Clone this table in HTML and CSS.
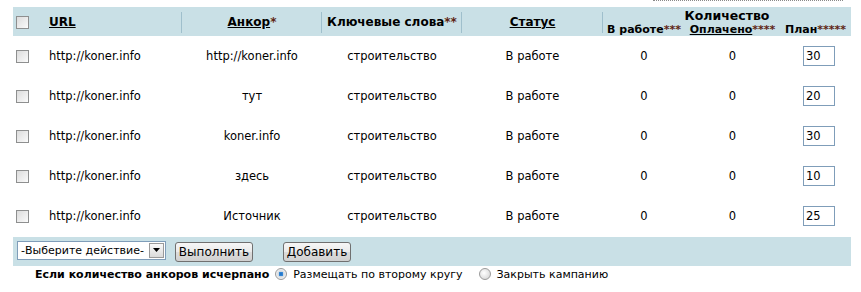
FILE: index.html
```html
<!DOCTYPE html>
<html lang="ru">
<head>
<meta charset="utf-8">
<link rel="stylesheet" href="styles.css">
</head>
<body>
<div class="topline"></div>
<table class="grid">
  <colgroup>
    <col class="w-chk"><col class="w-url"><col class="w-anc"><col class="w-kw"><col class="w-st"><col class="w-q1"><col class="w-q2"><col class="w-q3">
  </colgroup>
  <thead>
    <tr class="hr1">
      <th rowspan="2" class="hc-chk"><input type="checkbox" class="chk"></th>
      <th rowspan="2" class="hc-url sep"><a href="#">URL</a></th>
      <th rowspan="2" class="sep"><a href="#">Анкор</a><span class="ast">*</span></th>
      <th rowspan="2" class="sep">Ключевые слова<span class="ast">**</span></th>
      <th rowspan="2" class="sep"><a href="#">Статус</a></th>
      <th colspan="3" class="hc-qty">Количество</th>
    </tr>
    <tr class="hr2">
      <th class="hc-sub">В работе<span class="ast">***</span></th>
      <th class="hc-sub"><a href="#">Оплачено</a><span class="ast">****</span></th>
      <th class="hc-sub">План<span class="ast">*****</span></th>
    </tr>
  </thead>
  <tbody>
    <tr>
      <td class="c-chk"><input type="checkbox" class="chk"></td>
      <td class="c-url">http://koner.info</td>
      <td>http://koner.info</td>
      <td>строительство</td>
      <td>В работе</td>
      <td>0</td>
      <td>0</td>
      <td><input type="text" class="plan" value="30"></td>
    </tr>
    <tr>
      <td class="c-chk"><input type="checkbox" class="chk"></td>
      <td class="c-url">http://koner.info</td>
      <td>тут</td>
      <td>строительство</td>
      <td>В работе</td>
      <td>0</td>
      <td>0</td>
      <td><input type="text" class="plan" value="20"></td>
    </tr>
    <tr>
      <td class="c-chk"><input type="checkbox" class="chk"></td>
      <td class="c-url">http://koner.info</td>
      <td>koner.info</td>
      <td>строительство</td>
      <td>В работе</td>
      <td>0</td>
      <td>0</td>
      <td><input type="text" class="plan" value="30"></td>
    </tr>
    <tr>
      <td class="c-chk"><input type="checkbox" class="chk"></td>
      <td class="c-url">http://koner.info</td>
      <td>здесь</td>
      <td>строительство</td>
      <td>В работе</td>
      <td>0</td>
      <td>0</td>
      <td><input type="text" class="plan" value="10"></td>
    </tr>
    <tr>
      <td class="c-chk"><input type="checkbox" class="chk"></td>
      <td class="c-url">http://koner.info</td>
      <td>Источник</td>
      <td>строительство</td>
      <td>В работе</td>
      <td>0</td>
      <td>0</td>
      <td><input type="text" class="plan" value="25"></td>
    </tr>
  </tbody>
</table>
<div class="actions">
  <div class="select"><span class="select-text">-Выберите действие-</span><span class="select-btn"><svg width="7" height="4" viewBox="0 0 7 4"><path d="M0 0h7L3.5 4z" fill="#000"/></svg></span></div>
  <button class="btn btn-run" type="button">Выполнить</button>
  <button class="btn btn-add" type="button">Добавить</button>
</div>
<div class="exhaust">
  <span class="exhaust-label">Если количество анкоров исчерпано</span>
  <label class="opt"><input type="radio" name="ex" class="rad" checked>Размещать по второму кругу</label>
  <label class="opt opt2"><input type="radio" name="ex" class="rad">Закрыть кампанию</label>
</div>
</body>
</html>
```
FILE: styles.css
```css
html, body {
  margin: 0;
  padding: 0;
  background: #fff;
}
body {
  font-family: "DejaVu Sans", Verdana, sans-serif;
  font-size: 11.5px;
  color: #000;
  padding: 0 0 0 13px;
  width: 838px;
}
.topline {
  margin-left: 640px;
  width: 190px;
  height: 0;
  border-top: 1px dotted #8a8a8a;
  margin-bottom: 6px;
}
.grid {
  border-collapse: collapse;
  table-layout: fixed;
  width: 838px;
}
.w-chk { width: 27px; }
.w-url { width: 142px; }
.w-anc { width: 140px; }
.w-kw { width: 140px; }
.w-st { width: 141px; }
.w-q1 { width: 82px; }
.w-q2 { width: 95px; }
.w-q3 { width: 71px; }
.grid th, .grid td {
  padding: 0;
  text-align: center;
  vertical-align: middle;
}
.grid thead th {
  background: #c9e0e6;
  font-weight: bold;
  font-size: 12px;
  white-space: nowrap;
}
.grid a {
  color: #000;
  text-decoration: underline;
}
.ast {
  color: #5e2412;
}
.hr1 { height: 16px; }
.hr2 { height: 13px; }
.sep {
  position: relative;
}
.sep::after {
  content: "";
  position: absolute;
  right: 0;
  top: 5px;
  bottom: 3px;
  border-right: 1px solid #9fbfcc;
}
.hc-chk, .c-chk {
  text-align: left !important;
  padding-left: 3px !important;
}
.hc-url, .c-url {
  text-align: left !important;
  padding-left: 9px !important;
}
.grid thead .hc-qty {
  vertical-align: bottom;
  font-size: 12.5px;
  line-height: 13px;
  padding-bottom: 1px;
}
.grid thead .hc-sub {
  vertical-align: bottom;
  font-size: 11px;
  line-height: 11px;
  padding-bottom: 1px;
}
.grid tbody tr {
  height: 40px;
}
.chk {
  appearance: none;
  -webkit-appearance: none;
  width: 13px;
  height: 13px;
  margin: 0;
  border: 1px solid #8e8f8f;
  background: linear-gradient(135deg, #dcdcdc 0%, #f4f4f4 80%, #fff 100%);
  vertical-align: middle;
  display: inline-block;
}
.plan {
  width: 32px;
  height: 20px;
  box-sizing: border-box;
  border: 1px solid #7f9db9;
  padding: 1px 2px;
  margin: 0 0 0 7px;
  font-family: "DejaVu Sans", Verdana, sans-serif;
  font-size: 11.5px;
  color: #000;
  text-align: left;
  outline: none;
}
.actions {
  margin-top: 1px;
  height: 29px;
  background: #c9e0e6;
  display: flex;
  align-items: center;
  padding-left: 4px;
}
.select {
  width: 149px;
  height: 19px;
  box-sizing: border-box;
  border: 1px solid #7f9db9;
  background: #fff;
  display: flex;
  align-items: center;
  justify-content: space-between;
  font-size: 11px;
  white-space: nowrap;
  padding-left: 3px;
  margin-top: -3px;
  overflow: hidden;
}
.select-btn {
  flex: none;
  width: 15px;
  height: 15px;
  margin-right: 1px;
  box-sizing: border-box;
  border: 1px solid #9a9a9a;
  background: linear-gradient(#fafafa, #dadada);
  display: flex;
  align-items: center;
  justify-content: center;
}
.btn {
  height: 20px;
  box-sizing: border-box;
  border: 1px solid #707070;
  border-radius: 3px;
  background: linear-gradient(#f6f6f6 0%, #eaeaea 50%, #dcdcdc 51%, #d0d0d0 100%);
  font-family: "DejaVu Sans", Verdana, sans-serif;
  font-size: 12px;
  color: #000;
  padding: 0;
  margin-top: 1px;
}
.btn-run {
  width: 78px;
  margin-left: 9px;
}
.btn-add {
  width: 68px;
  margin-left: 30px;
}
.exhaust {
  display: flex;
  align-items: center;
  height: 16px;
  padding-left: 22px;
}
.exhaust-label {
  font-weight: bold;
  font-size: 11px;
  margin-right: 6px;
}
.opt {
  display: flex;
  align-items: center;
  font-size: 11px;
}
.opt2 {
  margin-left: 16px;
}
.rad {
  appearance: none;
  -webkit-appearance: none;
  width: 12px;
  height: 12px;
  margin: 0 6px 0 0;
  border-radius: 50%;
  border: 1px solid #9a9a9a;
  background: radial-gradient(circle at 40% 40%, #fff 0%, #e2e2e2 60%, #cfcfcf 100%);
  box-sizing: border-box;
}
.rad:checked {
  background: radial-gradient(circle, #1a6fc4 0%, #3a8bd8 30%, #cfd8e0 36%, #f2f2f2 70%, #d4d4d4 100%);
}
```
